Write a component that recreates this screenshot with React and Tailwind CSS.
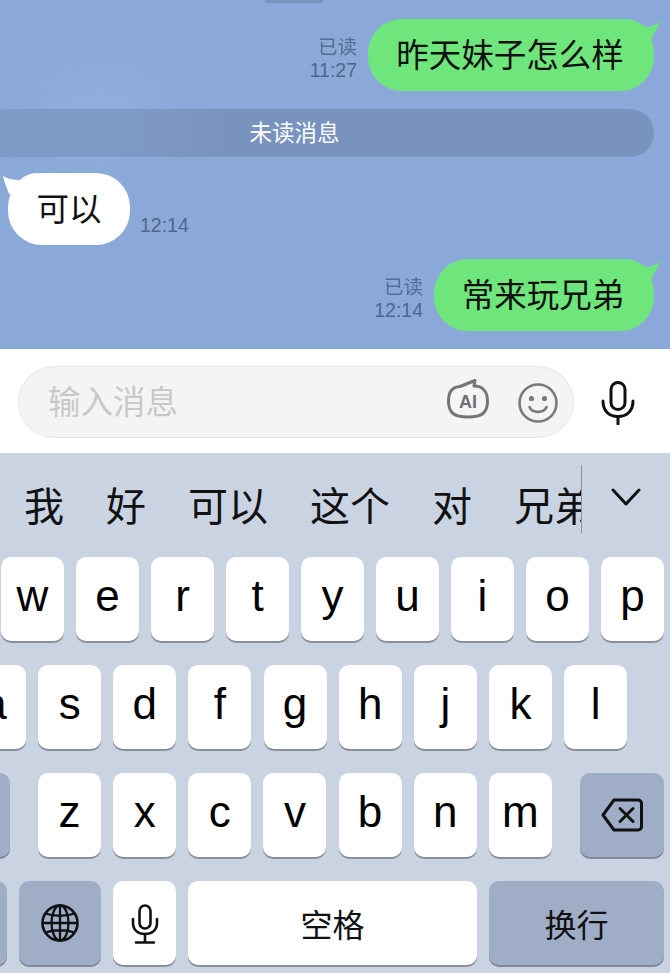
const CJK = "font-['Noto_Sans_CJK_SC','Liberation_Sans',sans-serif]";

function TailRight({ color }) {
  return (
    <svg className="absolute -right-[7px] top-0" width="40" height="30" viewBox="0 0 40 30">
      <path d="M4 0 C12 0 20 4 24 8 C30 8 35 6 39.5 2.5 C37 9 33 14 30 21 L4 21 Z" fill={color} />
    </svg>
  );
}

function TailLeft() {
  return (
    <svg className="absolute -left-[6px] top-0" width="40" height="30" viewBox="0 0 40 30">
      <path d="M36 0 C28 0 22 3 18 7 C12 7 6 6 1 3 C2 9 5 15 7 21 L36 21 Z" fill="#ffffff" />
    </svg>
  );
}

function SentRow({ text, time, width, className }) {
  return (
    <div className={`flex items-end justify-end gap-[11px] pr-4 ${className}`}>
      <div className={`flex flex-col items-end pb-[9px] text-[#51658a] ${CJK}`}>
        <span className="text-[19.5px] leading-[24px] opacity-90">已读</span>
        <span className="text-[19.5px] leading-[24px] font-['Liberation_Sans']">{time}</span>
      </div>
      <div className={`relative h-[72px] ${width} rounded-[34px] bg-[#6ee67c] flex items-center justify-center pb-1 pr-[2px]`}>
        <TailRight color="#6ee67c" />
        <span className={`relative text-[32.5px] leading-none text-[#111] ${CJK}`}>{text}</span>
      </div>
    </div>
  );
}

function Key({ label, className = "pb-[6px]" }) {
  return (
    <div className={`w-[63px] h-[84px] shrink-0 rounded-[10px] bg-white shadow-[0_2px_0_#8b8f99] flex items-center justify-center text-[44px] leading-none text-black font-['Liberation_Sans'] ${className}`}>
      {label}
    </div>
  );
}

function AiIcon() {
  return (
    <svg width="44" height="42" viewBox="0 0 44 42">
      <path d="M29 1.500 L14 7.500 C6 8 2.500 13 2.500 22 C2.500 34 8 38 22 38 C36 38 41.500 34 41.500 22 C41.500 12 36 7 28 7 Z" fill="none" stroke="#747474" strokeWidth="3" strokeLinejoin="round" />
      <text x="22" y="29" textAnchor="middle" fontFamily="Liberation Sans" fontWeight="700" fontSize="18" fill="#6f6f6f">AI</text>
    </svg>
  );
}

function SmileIcon() {
  return (
    <svg width="40" height="40" viewBox="0 0 40 40" fill="none" stroke="#7a7a7a" strokeWidth="2.6" strokeLinecap="round">
      <circle cx="20" cy="20" r="18.500" />
      <path d="M11.500 24 C14 30.500 26 30.500 28.500 24" />
      <circle cx="13.500" cy="15.500" r="1.300" fill="#7a7a7a" />
      <circle cx="26.500" cy="15.500" r="1.300" fill="#7a7a7a" />
    </svg>
  );
}

function MicIcon({ w, h, stroke }) {
  return (
    <svg width={w} height={h} viewBox="0 0 34 44" fill="none" stroke="#111" strokeWidth={stroke} strokeLinecap="round">
      <rect x="10" y="1.500" width="14" height="27" rx="7" />
      <path d="M2 20 C2 30 8 35.500 17 35.500 C26 35.500 32 30 32 20" />
      <path d="M17 35.500 V43" />
    </svg>
  );
}

function KeyMicIcon() {
  return (
    <svg width="28" height="40" viewBox="0 0 28 40" fill="none" stroke="#111" strokeWidth="2.600" strokeLinecap="round">
      <rect x="8.500" y="1.500" width="11" height="23" rx="5.500" />
      <path d="M2 15 V19 C2 26 7 30 14 30 C21 30 26 26 26 19 V15" />
      <path d="M14 30 V38 M5 38.500 H23" />
    </svg>
  );
}

function GlobeIcon() {
  return (
    <svg width="38" height="38" viewBox="0 0 38 38" fill="none" stroke="#111" strokeWidth="2.300">
      <circle cx="19" cy="19" r="17.500" strokeWidth="2.600" />
      <ellipse cx="19" cy="19" rx="8.500" ry="17.500" />
      <path d="M19 1.500 V36.500 M1.500 19 H36.500 M4.500 9.500 C13 12.500 25 12.500 33.500 9.500 M4.500 28.500 C13 25.500 25 25.500 33.500 28.500" />
    </svg>
  );
}

function BackspaceIcon() {
  return (
    <svg width="42" height="34" viewBox="0 0 42 34" fill="none" stroke="#111" strokeWidth="3" strokeLinecap="round" strokeLinejoin="round">
      <path d="M13 2 H37 C39 2 40.500 3.500 40.500 5.500 V28.500 C40.500 30.500 39 32 37 32 H13 L2 17 Z" />
      <path d="M19 10.500 L32 23.500 M32 10.500 L19 23.500" />
    </svg>
  );
}

export default function App() {
  return (
    <div className={`w-[670px] h-[973px] overflow-hidden bg-[#c9d3e2] ${CJK}`}>
      {/* Chat */}
      <div className="relative h-[349px] overflow-hidden bg-[#8aa9d9] flex flex-col">
        <div className="absolute left-[40px] top-[70px] w-[120px] h-[90px] rounded-full bg-[#90aedc] blur-[18px]" />
        <div className="relative h-[3px] w-[58px] ml-[265px] rounded-b-lg bg-[#7893bd]" />
        <SentRow text="昨天妹子怎么样" time="11:27" width="w-[286px]" className="relative mt-4" />

        <div className="relative mt-[18px] ml-[-65px] mr-4 h-[48px] shrink-0 rounded-full bg-linear-to-r from-[#7e9ac6] from-[25%] to-[#7893bd] to-[42%] flex items-center justify-center pb-[3px] text-[22.5px] text-white">
          未读消息
        </div>

        <div className="relative mt-4 pl-2 flex items-end gap-[10px]">
          <div className="relative h-[72px] w-[122px] rounded-[34px] bg-white flex items-center justify-center pb-1">
            <TailLeft />
            <span className="relative text-[32.5px] leading-none text-[#111]">可以</span>
          </div>
          <span className="pb-[8px] text-[19.5px] leading-[24px] text-[#51658a] font-['Liberation_Sans']">12:14</span>
        </div>

        <SentRow text="常来玩兄弟" time="12:14" width="w-[220px]" className="relative mt-[14px]" />
      </div>

      {/* Input */}
      <div className="h-[104px] bg-white flex items-center pl-[18px] pt-[1px]">
        <div className="w-[556px] h-[72px] rounded-[36px] bg-[#f4f4f4] border border-[#e6e6e6] flex items-center pl-[29px] pr-[15px]">
          <span className="flex-1 text-[32.5px] leading-none text-[#c8c8c8] pb-[3px]">输入消息</span>
          <div className="mr-[28px] mb-[3px]"><AiIcon /></div>
          <div className="mt-[2px]"><SmileIcon /></div>
        </div>
        <div className="ml-[27px] mt-[2px]"><MicIcon w={34} h={44} stroke={3} /></div>
      </div>

      {/* Suggestions */}
      <div className="h-[104px] flex items-center">
        <div className="w-[582px] h-[68px] mt-[-12px] shrink-0 overflow-hidden border-r border-[#8b93a3] flex items-center gap-[42px] pl-[24px] pt-[9px] text-[40px] leading-none text-[#111] whitespace-nowrap">
          <span>我</span>
          <span>好</span>
          <span>可以</span>
          <span>这个</span>
          <span>对</span>
          <span>兄弟</span>
        </div>
        <svg className="ml-[29px] mb-[16px]" width="30" height="18" viewBox="0 0 30 18" fill="none" stroke="#111" strokeWidth="3" strokeLinecap="round" strokeLinejoin="round">
          <path d="M2 2 L15 16 L28 2" />
        </svg>
      </div>

      {/* Keyboard */}
      <div className="flex flex-col gap-6">
        <div className="flex gap-3 pl-px">
          {["w", "e", "r", "t", "y", "u", "i", "o", "p"].map((k) => <Key key={k} label={k} />)}
        </div>
        <div className="flex gap-[12.15px] ml-[-37px]">
          {["a", "s", "d", "f", "g", "h", "j", "k", "l"].map((k) => <Key key={k} label={k} />)}
        </div>
        <div className="flex ml-[-60px]">
          <div className="w-[70px] h-[84px] shrink-0 rounded-[10px] bg-[#9fadc6] shadow-[0_2px_0_#80889a]" />
          <div className="flex gap-[12.15px] ml-[28px]">
            {["z", "x", "c", "v", "b", "n", "m"].map((k) => <Key key={k} label={k} />)}
          </div>
          <div className="ml-[28px] w-[84px] h-[84px] shrink-0 rounded-[10px] bg-[#9fadc6] shadow-[0_2px_0_#80889a] flex items-center justify-center">
            <BackspaceIcon />
          </div>
        </div>
        <div className="flex gap-3 ml-[-60px]">
          <div className="w-[67px] h-[84px] shrink-0 rounded-[10px] bg-[#9fadc6] shadow-[0_2px_0_#80889a]" />
          <div className="w-[82px] h-[84px] shrink-0 rounded-[10px] bg-[#9fadc6] shadow-[0_2px_0_#80889a] flex items-center justify-center">
            <GlobeIcon />
          </div>
          <Key label={<KeyMicIcon />} className="pt-[2px]" />
          <div className="w-[289px] h-[84px] shrink-0 rounded-[10px] bg-white shadow-[0_2px_0_#8b8f99] flex items-center justify-center text-[32px] leading-none text-[#111]">
            空格
          </div>
          <div className="w-[175px] h-[84px] shrink-0 rounded-[10px] bg-[#9fadc6] shadow-[0_2px_0_#80889a] flex items-center justify-center text-[32px] leading-none text-[#111]">
            换行
          </div>
        </div>
      </div>
    </div>
  );
}
